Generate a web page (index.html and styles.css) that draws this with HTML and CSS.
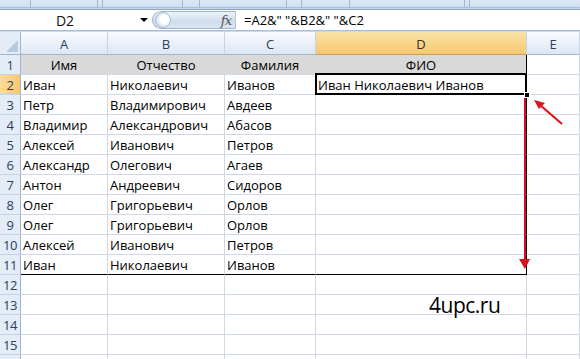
FILE: index.html
```html
<!DOCTYPE html>
<html>
<head>
<meta charset="utf-8">
<link rel="stylesheet" href="styles.css">
</head>
<body>
<div class="ribbon">
  <div class="rb w30"></div><div class="rb w67"></div><div class="rb w5"></div><div class="rb w80"></div><div class="rb w17"></div><div class="rb w87"></div><div class="rb w15"></div><div class="rb w48"></div><div class="rb w115"></div><div class="rb w5"></div><div class="rb grow"></div>
</div>
<div class="fbar">
  <div class="namebox"><span class="nb-text">D2</span><span class="nb-arrow"></span></div>
  <div class="pill"><span class="knob"></span><span class="fx">fx</span></div>
  <div class="formula">=A2&amp;" "&amp;B2&amp;" "&amp;C2</div>
</div>
<div class="gap"></div>
<div class="sheet">
  <div class="corner"><span class="tri"></span></div>
  <div class="ch">A</div><div class="ch">B</div><div class="ch">C</div><div class="ch sel">D</div><div class="ch">E</div>

  <div class="rh">1</div>
  <div class="c head">Имя</div><div class="c head">Отчество</div><div class="c head">Фамилия</div><div class="c head rb1">ФИО</div><div class="c"></div>

  <div class="rh sel">2</div>
  <div class="c">Иван</div><div class="c">Николаевич</div><div class="c">Иванов</div><div class="c rb1 active">Иван Николаевич Иванов<span class="handle"></span></div><div class="c"></div>

  <div class="rh">3</div>
  <div class="c">Петр</div><div class="c">Владимирович</div><div class="c">Авдеев</div><div class="c rb1"></div><div class="c"></div>

  <div class="rh">4</div>
  <div class="c">Владимир</div><div class="c">Александрович</div><div class="c">Абасов</div><div class="c rb1"></div><div class="c"></div>

  <div class="rh">5</div>
  <div class="c">Алексей</div><div class="c">Иванович</div><div class="c">Петров</div><div class="c rb1"></div><div class="c"></div>

  <div class="rh">6</div>
  <div class="c">Александр</div><div class="c">Олегович</div><div class="c">Агаев</div><div class="c rb1"></div><div class="c"></div>

  <div class="rh">7</div>
  <div class="c">Антон</div><div class="c">Андреевич</div><div class="c">Сидоров</div><div class="c rb1"></div><div class="c"></div>

  <div class="rh">8</div>
  <div class="c">Олег</div><div class="c">Григорьевич</div><div class="c">Орлов</div><div class="c rb1"></div><div class="c"></div>

  <div class="rh">9</div>
  <div class="c">Олег</div><div class="c">Григорьевич</div><div class="c">Орлов</div><div class="c rb1"></div><div class="c"></div>

  <div class="rh">10</div>
  <div class="c">Алексей</div><div class="c">Иванович</div><div class="c">Петров</div><div class="c rb1"></div><div class="c"></div>

  <div class="rh">11</div>
  <div class="c bb1">Иван</div><div class="c bb1">Николаевич</div><div class="c bb1">Иванов</div><div class="c rb1 bb1"></div><div class="c"></div>

  <div class="rh">12</div>
  <div class="c"></div><div class="c"></div><div class="c"></div><div class="c"></div><div class="c"></div>

  <div class="rh">13</div>
  <div class="c"></div><div class="c"></div><div class="c"></div><div class="c"></div><div class="c"></div>

  <div class="rh">14</div>
  <div class="c"></div><div class="c"></div><div class="c"></div><div class="c"></div><div class="c"></div>

  <div class="rh">15</div>
  <div class="c"></div><div class="c"></div><div class="c"></div><div class="c"></div><div class="c"></div>

  <div class="rh"></div>
  <div class="c"></div><div class="c"></div><div class="c"></div><div class="c"></div><div class="c"></div>

  <div class="watermark">4upc.ru</div>
  <svg class="arrows" width="580" height="359" viewBox="0 0 580 359">
    <line x1="562" y1="124" x2="540" y2="105" stroke="#e0141e" stroke-width="2.2"/>
    <polygon points="534,100 545,103 539,109" fill="#e0141e"/>
    <line x1="525" y1="98" x2="525" y2="262" stroke="#d5101a" stroke-width="2"/>
    <polygon points="519,259 530,259 525,269" fill="#d5101a"/>
  </svg>
</div>
</body>
</html>
```

FILE: styles.css
```css
* { box-sizing: border-box; }
html, body { margin: 0; padding: 0; }
body {
  width: 580px;
  height: 359px;
  overflow: hidden;
  background: #fff;
  font-family: "Open Sans", "Liberation Sans", sans-serif;
  color: #000;
  position: relative;
}
.ribbon {
  display: flex;
  height: 9px;
  background: #c5d6ea;
}
.rb {
  height: 8px;
  background: linear-gradient(#dfe9f5, #cfdff0);
  border-right: 1px solid #9fb8d3;
  border-bottom: 1px solid #a9c0da;
}
.w30 { width: 31px; }
.w67 { width: 67px; }
.w5 { width: 5px; }
.w80 { width: 80px; }
.w17 { width: 17px; }
.w87 { width: 87px; }
.w15 { width: 15px; }
.w48 { width: 48px; }
.w115 { width: 115px; }
.grow { flex: 1; border-right: 0; }

.fbar {
  display: flex;
  align-items: stretch;
  height: 22px;
  background: #fff;
  border-top: 1px solid #8ca5c3;
  border-bottom: 1px solid #a9bdd5;
}
.namebox {
  width: 152px;
  display: flex;
  align-items: center;
  position: relative;
  font-size: 14px;
  color: #111;
}
.nb-text { width: 130px; text-align: center; }
.nb-arrow {
  width: 0; height: 0;
  border-left: 4px solid transparent;
  border-right: 4px solid transparent;
  border-top: 4px solid #000;
  margin-left: 10px;
}
.pill {
  width: 84px;
  margin: 1px 0;
  border-radius: 10px 0 0 10px;
  background: linear-gradient(#eef3fa, #cfdcec 60%, #dbe6f3);
  border: 1px solid #9fb4cd;
  border-right: 1px solid #b7c7db;
  display: flex;
  align-items: center;
  justify-content: space-between;
  padding: 0 4px 0 2px;
}
.knob {
  width: 16px; height: 16px;
  border-radius: 50%;
  background: radial-gradient(circle at 60% 45%, #ffffff 0 35%, #dfe8f3 60%, #b9cadf);
  border: 1px solid #aabdd4;
}
.fx {
  font-family: "DejaVu Serif", "Liberation Serif", serif;
  font-style: italic;
  font-size: 13px;
  color: #555;
  letter-spacing: -1px;
}
.formula {
  flex: 1;
  padding-left: 8px;
  font-size: 13px;
  display: flex;
  align-items: center;
  color: #000;
}
.gap {
  height: 1px;
  background: #c9d8ea;
}

.sheet {
  display: grid;
  grid-template-columns: 21px 87px 117px 91px 211px 1fr;
  grid-template-rows: 23px repeat(16, 20px);
  position: relative;
  font-size: 13px;
}
.corner {
  background: #e4ecf7;
  border-right: 1px solid #9eb6ce;
  border-bottom: 1px solid #9eb6ce;
  position: relative;
}
.tri {
  position: absolute;
  right: 2px; bottom: 2px;
  width: 0; height: 0;
  border-left: 12px solid transparent;
  border-bottom: 12px solid #b8cadf;
}
.ch {
  background: linear-gradient(#f9fbfe, #e9eff8 60%, #dde6f2);
  border-right: 1px solid #c5d3e3;
  border-bottom: 1px solid #9eb6ce;
  display: flex;
  align-items: center;
  justify-content: center;
  color: #27415f;
  font-size: 13px;
  padding-top: 1px;
}
.ch.sel {
  background: linear-gradient(#fbe2a8, #f8d487 55%, #f4c870);
  border-bottom: 1px solid #c2a15c;
  color: #3a3020;
}
.rh {
  background: #e4ecf7;
  border-right: 1px solid #9eb6ce;
  border-bottom: 1px solid #c5d3e3;
  display: flex;
  align-items: center;
  justify-content: center;
  color: #27415f;
  font-size: 13px;
  letter-spacing: -0.5px;
}
.rh.sel {
  background: linear-gradient(90deg, #fbdc9c, #f6c86d);
}
.c {
  border-right: 1px solid #d0d7e5;
  border-bottom: 1px solid #d0d7e5;
  display: flex;
  align-items: center;
  padding-left: 2px;
  padding-top: 1px;
  white-space: nowrap;
  overflow: visible;
  color: #000;
}
.c.head {
  background: #d9d9d9;
  justify-content: center;
  padding-left: 0;
}
.rb1 { border-right: 1px solid #000; }
.bb1 { border-bottom: 1px solid #000; }
.active {
  position: relative;
  padding-left: 2px;
}
.active::after {
  content: "";
  position: absolute;
  left: -1px; top: -2px; right: -1px; bottom: -1px;
  border: 2px solid #000;
}
.handle {
  position: absolute;
  right: -4px; bottom: -4px;
  width: 6px; height: 6px;
  background: #000;
  border: 1px solid #fff;
  z-index: 2;
}
.watermark {
  position: absolute;
  left: 429px;
  top: 259px;
  font-family: "Open Sans", "Liberation Sans", sans-serif;
  font-size: 21px;
  color: #000;
  letter-spacing: -0.5px;
}
.arrows {
  position: absolute;
  left: 0;
  top: -32px;
  pointer-events: none;
}
```
